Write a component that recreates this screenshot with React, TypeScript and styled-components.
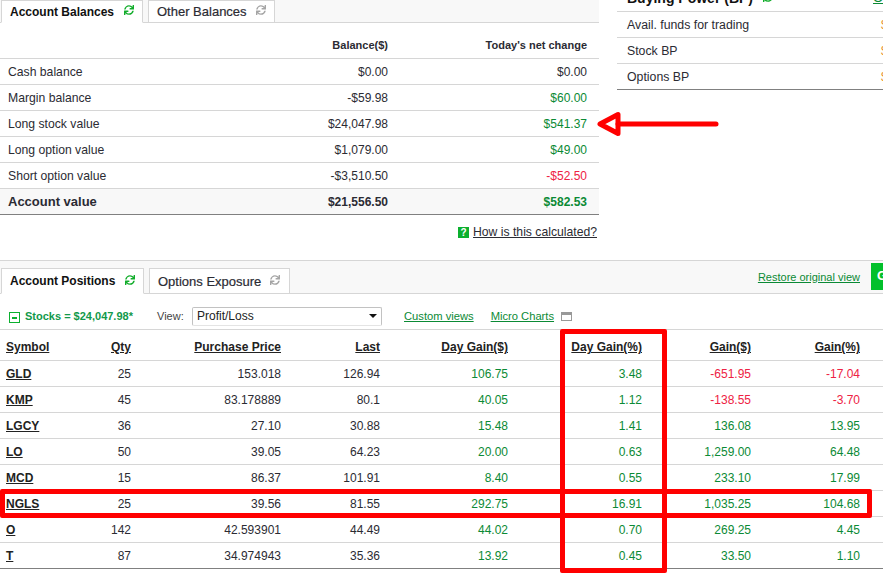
import React from "react";
import styled, { createGlobalStyle } from "styled-components";
import { FaSync } from "react-icons/fa";

const Global = createGlobalStyle`
  html, body { margin: 0; padding: 0; background: #fff; }
  body { font-family: "Liberation Sans", Arial, sans-serif; font-size: 12px; color: #2b2b33; }
`;

const GREEN = "#0b8a35";
const RED = "#ee2244";
const LINE = "#d6d6d6";
const DARK = "#808080";

type Tone = "plain" | "gain" | "loss";
const toneColor = (t?: Tone) => (t === "gain" ? GREEN : t === "loss" ? RED : "#2b2b33");

const Page = styled.div`
  position: relative;
  width: 883px;
  height: 581px;
  overflow: hidden;
`;
const TopSection = styled.div`
  display: flex;
  align-items: flex-start;
  height: 260px;
`;
const BalancesColumn = styled.div`
  width: 599px;
  flex: none;
`;
const TabStrip = styled.div<{ $top: number; $height: number }>`
  display: flex;
  align-items: flex-end;
  height: ${(p) => p.$height}px;
  box-sizing: border-box;
  padding: ${(p) => p.$top}px 0 0 1px;
  background: #f8f8f8;
  border-bottom: 1px solid ${LINE};
`;
const Tab = styled.div<{ $active?: boolean; $width: number }>`
  box-sizing: border-box;
  flex: none;
  width: ${(p) => p.$width}px;
  height: calc(100% + 1px);
  margin-bottom: -1px;
  margin-right: 5px;
  display: flex;
  align-items: center;
  gap: ${(p) => (p.$active ? 10 : 9)}px;
  padding-left: 8px;
  white-space: nowrap;
  background: #fff;
  border: 1px solid ${LINE};
  border-bottom-color: ${(p) => (p.$active ? "#fff" : LINE)};
  font-size: ${(p) => (p.$active ? "12px" : "13px")};
  font-weight: ${(p) => (p.$active ? 700 : 400)};
  color: ${(p) => (p.$active ? "#111" : "#2b2b33")};
  -webkit-text-stroke: ${(p) => (p.$active ? "0" : "0.2px #2b2b33")};
`;
const Refresh = styled(FaSync)<{ $on?: boolean }>`
  width: 10px;
  height: 10px;
  color: ${(p) => (p.$on ? "#12ad2b" : "#a5a5a5")};
  flex: none;
  margin-top: -3px;
`;
const BalanceHead = styled.div`
  display: grid;
  grid-template-columns: 388px 199px;
  align-items: center;
  box-sizing: border-box;
  height: 36px;
  padding-top: 9px;
  border-bottom: 1px solid ${LINE};
  font-weight: 700;
  font-size: 11px;
  text-align: right;
`;
const BalanceRow = styled.div<{ $total?: boolean }>`
  display: grid;
  grid-template-columns: 388px 199px;
  box-sizing: border-box;
  align-items: center;
  height: 26px;
  border-bottom: 1px solid ${(p) => (p.$total ? DARK : LINE)};
  background: ${(p) => (p.$total ? "#f8f8f8" : "#fff")};
  font-weight: ${(p) => (p.$total ? 700 : 400)};
`;
const BalanceLabel = styled.div<{ $total?: boolean }>`
  padding-left: 8px;
  display: flex;
  align-items: center;
  justify-content: space-between;
  font-size: ${(p) => (p.$total ? "13px" : "12.2px")};
`;
const BalanceCell = styled.div<{ $tone?: Tone }>`
  text-align: right;
  font-size: 12px;
  color: ${(p) => toneColor(p.$tone)};
`;
const HelpRow = styled.div`
  display: flex;
  justify-content: flex-end;
  align-items: center;
  gap: 4px;
  height: 34px;
  padding-right: 2px;
`;
const HelpBox = styled.span`
  width: 11px;
  height: 11px;
  background: #0cb02f;
  color: #fff;
  font-size: 10px;
  font-weight: 700;
  line-height: 11px;
  text-align: center;
`;
const HelpLink = styled.a`
  color: #2b2b33;
  text-decoration: underline;
  font-size: 12.2px;
`;
const PowerColumn = styled.div`
  width: 300px;
  flex: none;
  margin: -15px 0 0 18px;
`;
const PowerHead = styled.div`
  position: relative;
  box-sizing: border-box;
  height: 27px;
  display: flex;
  align-items: center;
  gap: 10px;
  padding: 0 0 0 10px;
  border-bottom: 1px solid ${LINE};
  font-weight: 700;
  font-size: 14px;
  color: #111;
`;
const PowerLink = styled.a`
  position: absolute;
  left: 256px;
  top: 5px;
  color: ${GREEN};
  font-weight: 400;
  text-decoration: underline;
  font-size: 13px;
`;
const PowerRow = styled.div<{ $last?: boolean }>`
  display: grid;
  grid-template-columns: 264px 1fr;
  align-items: center;
  box-sizing: border-box;
  height: 26px;
  padding-left: 10px;
  font-size: 12.3px;
  border-bottom: 1px solid ${(p) => (p.$last ? DARK : LINE)};
`;
const PowerValue = styled.span`
  color: #e8902a;
  margin-left: -10px;
`;
const StripRight = styled.div`
  margin-left: auto;
  align-self: stretch;
  display: flex;
  align-items: center;
  gap: 11px;
  margin-top: -8px;
`;
const GreenLink = styled.a`
  color: ${GREEN};
  text-decoration: underline;
  font-size: 11px;
  white-space: nowrap;
`;
const ToolLink = styled(GreenLink)`
  font-size: 11.2px;
`;
const GoButton = styled.div`
  width: 30px;
  height: 27px;
  box-sizing: border-box;
  margin-right: -18px;
  padding-left: 6px;
  background: #02c02b;
  color: #fff;
  font-size: 13px;
  font-weight: 700;
  line-height: 25px;
`;
const PositionsStrip = styled(TabStrip)`
  border-top: 1px solid ${LINE};
`;
const Toolbar = styled.div`
  display: flex;
  align-items: center;
  height: 36px;
  box-sizing: border-box;
  padding: 9px 0 0 9px;
  border-bottom: 1px solid ${LINE};
`;
const MinusBox = styled.span`
  width: 11px;
  height: 11px;
  flex: none;
  box-sizing: border-box;
  border: 1px solid #0cb02f;
  display: flex;
  align-items: center;
  justify-content: center;
  margin: 3px 5px 0 0;
  &::after {
    content: "";
    width: 5px;
    height: 2px;
    background: #0cb02f;
  }
`;
const StocksLabel = styled.span`
  color: #12994a;
  font-weight: 700;
  font-size: 11px;
  width: 132px;
  flex: none;
`;
const ViewLabel = styled.span`
  font-size: 11px;
  color: #444;
  width: 35px;
  flex: none;
`;
const SelectBox = styled.div`
  width: 190px;
  height: 19px;
  flex: none;
  box-sizing: border-box;
  border: 1px solid #c2c2c2;
  border-bottom-color: #e4e4e4;
  border-radius: 2px;
  display: flex;
  align-items: center;
  justify-content: space-between;
  padding: 0 4px;
  margin-right: 22px;
  font-size: 12px;
  color: #222;
`;
const Caret = styled.span`
  width: 0;
  height: 0;
  border-left: 4px solid transparent;
  border-right: 4px solid transparent;
  border-top: 4px solid #111;
`;
const ToolLinks = styled.div`
  display: flex;
  align-items: center;
  gap: 17px;
`;
const WindowIcon = styled.span`
  width: 11px;
  height: 9px;
  box-sizing: border-box;
  border: 1px solid #999;
  border-top-width: 3px;
  margin-left: -10px;
`;
const PosHead = styled.div`
  display: grid;
  grid-template-columns: 131px 150px 99px 128px 134px 109px 109px;
  align-items: center;
  box-sizing: border-box;
  height: 31px;
  padding-top: 4px;
  border-bottom: 1px solid ${LINE};
`;
const PosRow = styled.div<{ $last?: boolean }>`
  display: grid;
  grid-template-columns: 131px 150px 99px 128px 134px 109px 109px;
  align-items: center;
  box-sizing: border-box;
  height: 26px;
  border-bottom: 1px solid ${(p) => (p.$last ? DARK : LINE)};
`;
const SymbolCell = styled.div`
  padding-left: 6px;
  display: flex;
  align-items: center;
  justify-content: space-between;
`;
const HeadText = styled.a`
  color: #222;
  font-weight: 700;
  text-decoration: underline;
`;
const NumCell = styled.div<{ $tone?: Tone }>`
  text-align: right;
  color: ${(p) => toneColor(p.$tone)};
`;
const Highlight = styled.div<{ $l: number; $t: number; $w: number; $h: number }>`
  position: absolute;
  left: ${(p) => p.$l}px;
  top: ${(p) => p.$t}px;
  width: ${(p) => p.$w}px;
  height: ${(p) => p.$h}px;
  box-sizing: border-box;
  border: 5px solid #ff0000;
  border-radius: 2px;
  pointer-events: none;
`;
const ArrowSvg = styled.svg`
  position: absolute;
  left: 590px;
  top: 105px;
`;

const balances: [string, string, string, Tone][] = [
  ["Cash balance", "$0.00", "$0.00", "plain"],
  ["Margin balance", "-$59.98", "$60.00", "gain"],
  ["Long stock value", "$24,047.98", "$541.37", "gain"],
  ["Long option value", "$1,079.00", "$49.00", "gain"],
  ["Short option value", "-$3,510.50", "-$52.50", "loss"],
];

const positions: [string, string, string, string, string, string, string, string, Tone][] = [
  ["GLD", "25", "153.018", "126.94", "106.75", "3.48", "-651.95", "-17.04", "loss"],
  ["KMP", "45", "83.178889", "80.1", "40.05", "1.12", "-138.55", "-3.70", "loss"],
  ["LGCY", "36", "27.10", "30.88", "15.48", "1.41", "136.08", "13.95", "gain"],
  ["LO", "50", "39.05", "64.23", "20.00", "0.63", "1,259.00", "64.48", "gain"],
  ["MCD", "15", "86.37", "101.91", "8.40", "0.55", "233.10", "17.99", "gain"],
  ["NGLS", "25", "39.56", "81.55", "292.75", "16.91", "1,035.25", "104.68", "gain"],
  ["O", "142", "42.593901", "44.49", "44.02", "0.70", "269.25", "4.45", "gain"],
  ["T", "87", "34.974943", "35.36", "13.92", "0.45", "33.50", "1.10", "gain"],
];

const heads = ["Purchase Price", "Last", "Day Gain($)", "Day Gain(%)", "Gain($)", "Gain(%)"];

export default function App() {
  return (
    <Page>
      <Global />
      <TopSection>
        <BalancesColumn>
          <TabStrip $top={0} $height={23}>
            <Tab $active $width={142}>
              Account Balances <Refresh $on />
            </Tab>
            <Tab $width={127}>
              Other Balances <Refresh />
            </Tab>
          </TabStrip>
          <BalanceHead>
            <div>Balance($)</div>
            <div>Today's net change</div>
          </BalanceHead>
          {balances.map(([label, bal, chg, tone]) => (
            <BalanceRow key={label}>
              <BalanceLabel>
                {label}
                <BalanceCell>{bal}</BalanceCell>
              </BalanceLabel>
              <BalanceCell $tone={tone}>{chg}</BalanceCell>
            </BalanceRow>
          ))}
          <BalanceRow $total>
            <BalanceLabel $total>
              Account value
              <BalanceCell>$21,556.50</BalanceCell>
            </BalanceLabel>
            <BalanceCell $tone="gain">$582.53</BalanceCell>
          </BalanceRow>
          <HelpRow>
            <HelpBox>?</HelpBox>
            <HelpLink>How is this calculated?</HelpLink>
          </HelpRow>
        </BalancesColumn>
        <PowerColumn>
          <PowerHead>
            Buying Power (BP) <Refresh $on />
            <PowerLink>Open</PowerLink>
          </PowerHead>
          <PowerRow>
            Avail. funds for trading<PowerValue>$</PowerValue>
          </PowerRow>
          <PowerRow>
            Stock BP<PowerValue>$</PowerValue>
          </PowerRow>
          <PowerRow $last>
            Options BP<PowerValue>$</PowerValue>
          </PowerRow>
        </PowerColumn>
      </TopSection>

      <PositionsStrip $top={7} $height={34}>
        <Tab $active $width={143}>
          Account Positions <Refresh $on />
        </Tab>
        <Tab $width={141}>
          Options Exposure <Refresh />
        </Tab>
        <StripRight>
          <GreenLink>Restore original view</GreenLink>
          <GoButton>G</GoButton>
        </StripRight>
      </PositionsStrip>
      <Toolbar>
        <MinusBox />
        <StocksLabel>Stocks = $24,047.98*</StocksLabel>
        <ViewLabel>View:</ViewLabel>
        <SelectBox>
          Profit/Loss
          <Caret />
        </SelectBox>
        <ToolLinks>
          <ToolLink>Custom views</ToolLink>
          <ToolLink>Micro Charts</ToolLink>
          <WindowIcon />
        </ToolLinks>
      </Toolbar>
      <PosHead>
        <SymbolCell>
          <HeadText>Symbol</HeadText>
          <HeadText>Qty</HeadText>
        </SymbolCell>
        {heads.map((h) => (
          <NumCell key={h}>
            <HeadText>{h}</HeadText>
          </NumCell>
        ))}
      </PosHead>
      {positions.map(([sym, qty, price, last, dg, dp, g, gp, tone], i) => (
        <PosRow key={sym} $last={i === positions.length - 1}>
          <SymbolCell>
            <HeadText>{sym}</HeadText>
            {qty}
          </SymbolCell>
          <NumCell>{price}</NumCell>
          <NumCell>{last}</NumCell>
          <NumCell $tone="gain">{dg}</NumCell>
          <NumCell $tone="gain">{dp}</NumCell>
          <NumCell $tone={tone}>{g}</NumCell>
          <NumCell $tone={tone}>{gp}</NumCell>
        </PosRow>
      ))}

      <Highlight $l={560} $t={329} $w={107} $h={244} />
      <Highlight $l={0} $t={489} $w={872} $h={29} />
      <ArrowSvg width="130" height="40" viewBox="0 0 130 40">
        <path d="M28 19h98" stroke="#ff0000" strokeWidth="5" strokeLinecap="round" fill="none" />
        <path d="M10 19 L28 9.5 V28.5 Z" stroke="#ff0000" strokeWidth="5" strokeLinejoin="round" fill="none" />
      </ArrowSvg>
    </Page>
  );
}
